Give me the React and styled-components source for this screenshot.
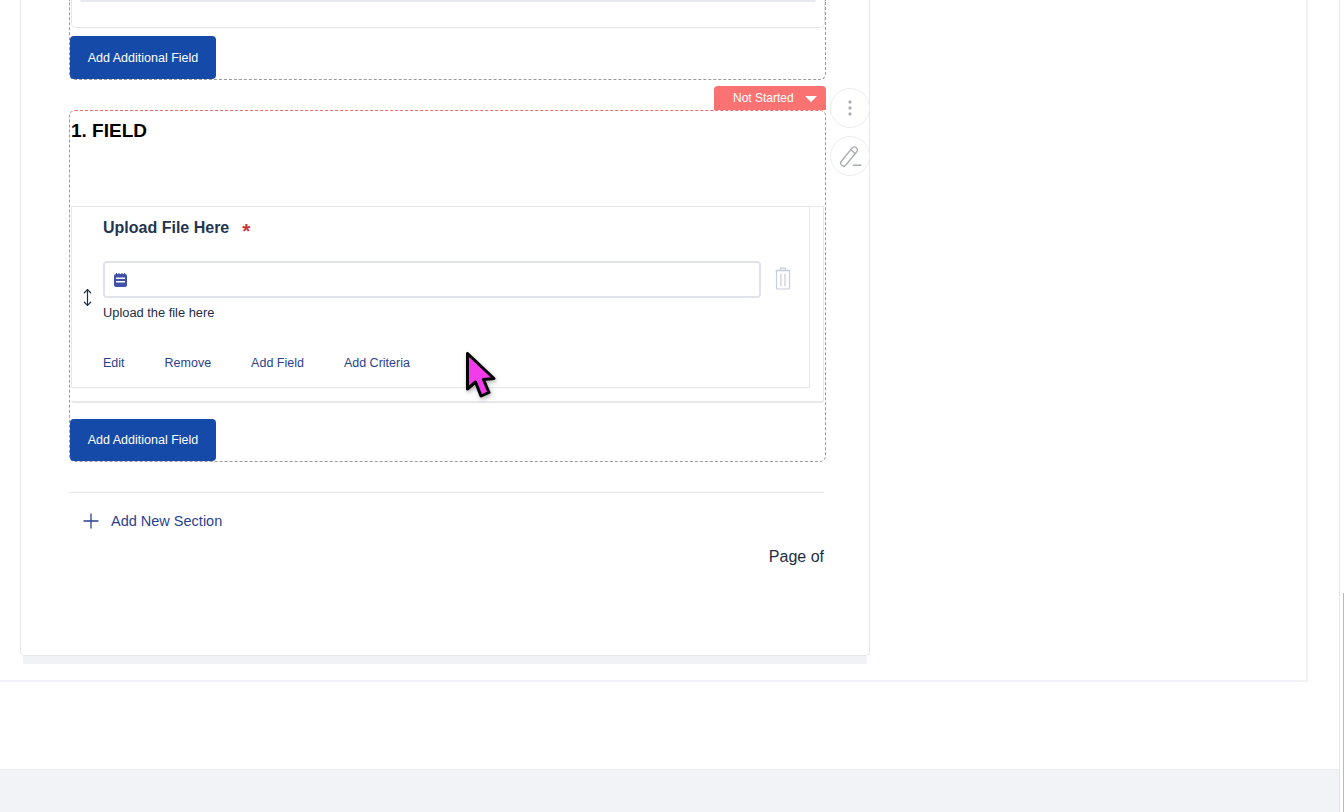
import React from 'react';
import styled, { createGlobalStyle } from 'styled-components';
import { MoveVertical, Plus } from 'lucide-react';

const GlobalStyle = createGlobalStyle`
  html, body {
    margin: 0;
    padding: 0;
    height: 100%;
    overflow: hidden;
    background: #fff;
    font-family: "Liberation Sans", Arial, sans-serif;
  }
  * { box-sizing: border-box; }
`;

const Shell = styled.div`
  position: relative;
  width: 1344px;
  height: 812px;
  display: flex;
  flex-direction: column;
  overflow: hidden;
  background: #fff;
`;

const Main = styled.main`
  height: 769px;
  width: 1340px;
  flex: none;
  border-right: 1px solid #e6e6ea;
`;

const Panel = styled.div`
  width: 1308px;
  height: 682px;
  border-right: 2px solid #f1f2f6;
  border-bottom: 2px solid #f1f2f6;
`;

const Card = styled.div`
  width: 850px;
  height: 656px;
  margin-left: 20px;
  padding-left: 48px;
  background: #fff;
  border: 1px solid #e6e7eb;
  border-top: none;
  border-radius: 0 0 5px 5px;
  box-shadow: 0 11px 0 -3px #f1f2f6;
`;

const Section = styled.section`
  position: relative;
  width: 757px;
  height: ${p => p.$height}px;
  margin-bottom: ${p => p.$gap || 0}px;
  border: 1px dashed #9a9a9a;
  border-top: ${p => (p.$open ? 'none' : '1px dashed #f06a6a')};
  border-radius: ${p => (p.$open ? '0 0 6px 6px' : '6px')};
  display: flex;
  flex-direction: column;
`;

const CutOffBox = styled.div`
  height: 28px;
  margin-left: 1px;
  padding: 0 8px;
  border: 1px solid #e6e7eb;
  border-top: none;
  border-radius: 0 0 5px 5px;
`;

const CutOffLine = styled.div`
  height: 2px;
  background: #e8e9ed;
  border-radius: 0 0 3px 3px;
`;

const AddFieldButton = styled.button`
  width: 146px;
  height: ${p => p.$height}px;
  margin: ${p => p.$top}px 0 -1px 0;
  padding: 0;
  border: none;
  border-radius: 4px;
  background: #164aa8;
  color: #fff;
  font-family: inherit;
  font-size: 12.5px;
  flex: none;
`;

const StatusBadge = styled.div`
  position: absolute;
  top: -25px;
  right: -1px;
  width: 112px;
  height: 24px;
  padding: 0 9px 0 19px;
  display: flex;
  align-items: center;
  justify-content: space-between;
  background: #fb7272;
  color: #fff;
  font-size: 12px;
  border-radius: 4px 4px 0 0;
`;

const Caret = styled.span`
  width: 0;
  height: 0;
  border-left: 6px solid transparent;
  border-right: 6px solid transparent;
  border-top: 6px solid #fff;
  margin-top: 2px;
`;

const ActionRail = styled.div`
  position: absolute;
  top: -23px;
  left: 760px;
  display: flex;
  flex-direction: column;
  gap: 8px;
`;

const RoundButton = styled.button`
  width: 40px;
  height: 40px;
  padding: 0;
  border: 1px solid #ecedf0;
  border-radius: 50%;
  background: #fff;
  color: #a9abb5;
  display: flex;
  align-items: center;
  justify-content: center;
`;

const SectionTitle = styled.h2`
  height: 95px;
  margin: 0;
  padding: 9px 0 0 1px;
  font-size: 19px;
  line-height: 21px;
  font-weight: 700;
  color: #000;
  flex: none;
`;

const FieldFrame = styled.div`
  height: 197px;
  margin: 0 1px;
  border: 1px solid #e6e7eb;
  border-bottom-width: 2px;
  border-left: none;
  border-radius: 0 0 3px 3px;
  flex: none;
`;

const FieldRow = styled.div`
  height: 181px;
  width: 739px;
  border: 1px solid #e6e7eb;
  border-top: none;
  display: grid;
  grid-template-columns: 31px 1fr;
`;

const DragHandle = styled.div`
  display: flex;
  align-items: center;
  justify-content: center;
  padding-right: 1px;
  color: #1f2d44;
`;

const FieldBody = styled.div`
  display: flex;
  flex-direction: column;
`;

const FieldLabel = styled.div`
  height: 54px;
  padding-top: 11px;
  display: flex;
  align-items: flex-start;
  gap: 13px;
  font-size: 16px;
  line-height: 20px;
  font-weight: 700;
  color: #24364f;
`;

const Required = styled.span`
  margin-top: 3px;
  color: #c8343f;
  font-size: 21px;
`;

const InputRow = styled.div`
  display: flex;
  align-items: center;
  gap: 14px;
`;

const FileInput = styled.div`
  width: 658px;
  height: 37px;
  padding-left: 9px;
  display: flex;
  align-items: center;
  border: 2px solid #e0e3e8;
  border-radius: 4px;
  background: #fff;
`;

const TrashWrap = styled.div`
  display: flex;
  margin-top: -2px;
`;

const HelpText = styled.div`
  margin-top: 7px;
  font-size: 12.85px;
  line-height: 16px;
  color: #1f2d44;
`;

const LinkRow = styled.div`
  display: flex;
  gap: 40px;
  margin-top: 34px;
`;

const TextLink = styled.a`
  font-size: 12.5px;
  line-height: 16px;
  color: #2b3f8f;
`;

const Divider = styled.div`
  width: 755px;
  height: 1px;
  margin-top: 30px;
  background: #e6e7eb;
`;

const AddSection = styled.div`
  height: 56px;
  padding-left: 10px;
  display: flex;
  align-items: center;
  gap: 8px;
  font-size: 14.5px;
  color: #2b3f8f;
`;

const PageCount = styled.div`
  width: 755px;
  text-align: right;
  font-size: 16px;
  line-height: 18px;
  margin-top: -1px;
  color: #1f2d44;
`;

const Footer = styled.footer`
  flex: 1;
  background: #f2f3f7;
  border-top: 1px solid #e9eaee;
  width: 1340px;
  border-right: 1px solid #e6e6ea;
`;

const ScrollThumb = styled.div`
  position: absolute;
  top: 593px;
  right: 0;
  width: 1px;
  height: 219px;
  background: #b9b9b9;
`;

const Pointer = styled.svg`
  position: absolute;
  left: 462px;
  top: 349px;
  filter: drop-shadow(1px 2px 2px rgba(0, 0, 0, 0.3));
`;

const EraserPen = () => (
  <svg width="26" height="26" viewBox="0 0 24 24" fill="none" stroke="currentColor" strokeWidth="1.3" strokeLinejoin="round" strokeLinecap="round">
    <path d="M3.5 17.5 14 4.5a2.4 2.4 0 0 1 3.4-.4l.6.5a2.4 2.4 0 0 1 .3 3.4L8 20.5a2.3 2.3 0 0 1-3.2.3l-.9-.7a2 2 0 0 1-.4-2.6Z" />
    <path d="m12.6 6.3 4.4 3.6" />
    <path d="M15 20.5h7" />
  </svg>
);

const Dots = () => (
  <svg width="4" height="16" viewBox="0 0 4 16" fill="#aeb0b8">
    <circle cx="2" cy="2" r="1.7" />
    <circle cx="2" cy="8" r="1.7" />
    <circle cx="2" cy="14" r="1.7" />
  </svg>
);

const CalendarIcon = () => (
  <svg width="13" height="14" viewBox="0 0 13 14">
    <rect x="0" y="1" width="13" height="13" rx="2" fill="#3f51a8" />
    <rect x="2" y="4.5" width="9" height="1.5" fill="#fff" />
    <rect x="2" y="8" width="9" height="1.5" fill="#fff" />
    <path d="M2.5 0v2M5 0v2M8 0v2M10.5 0v2" stroke="#3f51a8" strokeWidth="1" />
  </svg>
);

const TrashIcon = () => (
  <svg width="16" height="23" viewBox="0 0 16 23" fill="none" stroke="#c9cede" strokeWidth="1.2">
    <path d="M0.5 3.5h15" strokeWidth="1.6" />
    <path d="M5.5 3V1.2h5V3" />
    <path d="M1.5 4v17a1 1 0 0 0 1 1h11a1 1 0 0 0 1-1V4" />
    <path d="M6 7v12M10 7v12" />
  </svg>
);

const App = () => {
  return (
    <Shell>
      <GlobalStyle />
      <Main>
        <Panel>
          <Card>
            <Section $open $height={80} $gap={30}>
              <CutOffBox>
                <CutOffLine />
              </CutOffBox>
              <AddFieldButton $height={43} $top={8}>Add Additional Field</AddFieldButton>
            </Section>

            <Section $height={352}>
              <StatusBadge>
                Not Started
                <Caret />
              </StatusBadge>
              <ActionRail>
                <RoundButton><Dots /></RoundButton>
                <RoundButton><EraserPen /></RoundButton>
              </ActionRail>

              <SectionTitle>1. FIELD</SectionTitle>

              <FieldFrame>
                <FieldRow>
                  <DragHandle>
                    <MoveVertical size={19} strokeWidth={1.5} />
                  </DragHandle>
                  <FieldBody>
                    <FieldLabel>
                      Upload File Here
                      <Required>*</Required>
                    </FieldLabel>
                    <InputRow>
                      <FileInput><CalendarIcon /></FileInput>
                      <TrashWrap><TrashIcon /></TrashWrap>
                    </InputRow>
                    <HelpText>Upload the file here</HelpText>
                    <LinkRow>
                      <TextLink>Edit</TextLink>
                      <TextLink>Remove</TextLink>
                      <TextLink>Add Field</TextLink>
                      <TextLink>Add Criteria</TextLink>
                    </LinkRow>
                  </FieldBody>
                </FieldRow>
              </FieldFrame>

              <AddFieldButton $height={42} $top={16}>Add Additional Field</AddFieldButton>
            </Section>

            <Divider />
            <AddSection>
              <Plus size={24} strokeWidth={1.3} />
              Add New Section
            </AddSection>
            <PageCount>Page of</PageCount>
          </Card>
        </Panel>
      </Main>
      <Footer />
      <ScrollThumb />
      <Pointer width="38" height="52" viewBox="0 0 38 52">
        <path d="M5.5 4.5 5.5 40 13.5 33 19 47 27 43.5 21.5 30.5 32 29.5Z" fill="#f23bea" stroke="#000" strokeWidth="3" strokeLinejoin="round" />
      </Pointer>
    </Shell>
  );
};

export default App;
